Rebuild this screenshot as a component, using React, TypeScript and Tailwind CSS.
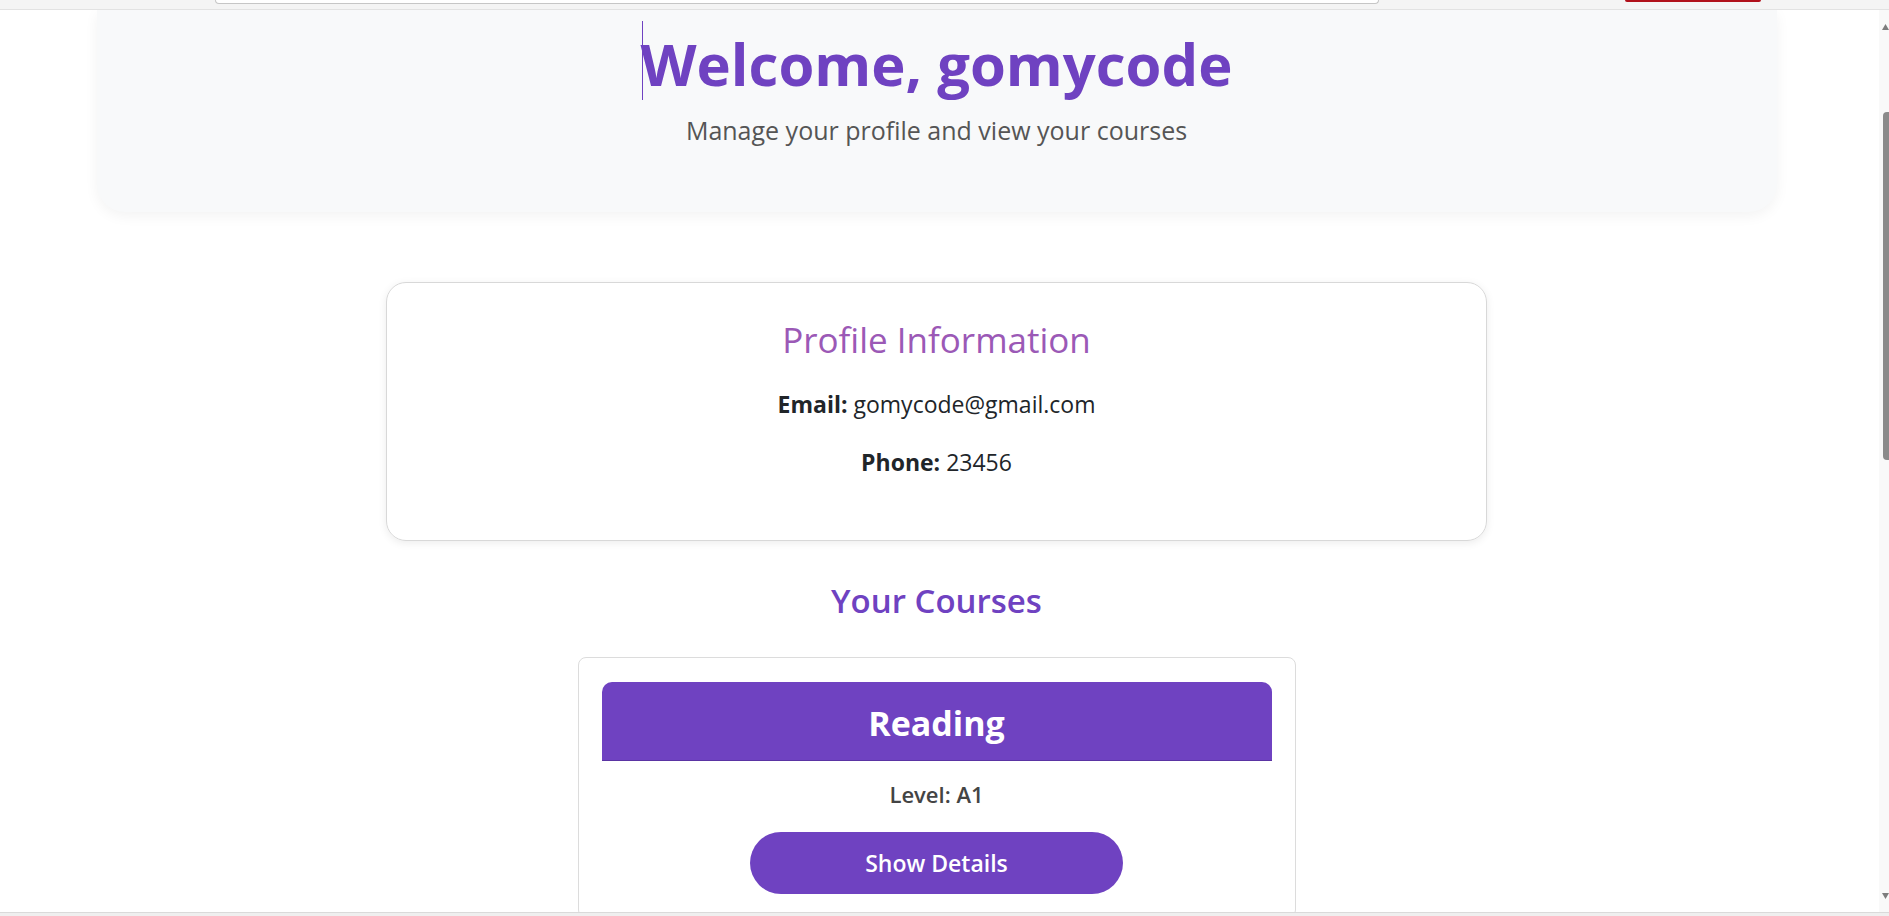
import React from 'react';

const TopBar = () => (
  <div className="h-[10px] shrink-0 bg-[#f4f4f4] border-b border-[#e2e2e2] flex items-start">
    <div className="w-[215px] shrink-0" />
    <div className="w-[1164px] h-[4px] shrink-0 bg-white border-x border-b border-[#c6c6c6] rounded-b-[8px]" />
    <div className="w-[246px] shrink-0" />
    <div className="w-[136px] h-[2px] shrink-0 bg-[#b0101a] rounded-b-[2px]" />
  </div>
);

const ScrollBar = () => (
  <div className="w-[16px] shrink-0 flex">
    <div className="w-[6px] bg-white" />
    <div className="flex-1 bg-[#f9f9f9] flex flex-col items-end pt-[14px] pb-[13px]">
      <svg width="7" height="6" viewBox="0 0 7 6">
        <polygon points="3.5,0 7,6 0,6" fill="#7d7d7d" />
      </svg>
      <div className="mt-[82px] w-[6px] h-[348px] rounded-l-[4px] bg-[#8b8b8b]" />
      <div className="flex-1" />
      <svg width="7" height="6" viewBox="0 0 7 6">
        <polygon points="0,0 7,0 3.5,6" fill="#7d7d7d" />
      </svg>
    </div>
  </div>
);

const Header = () => (
  <header className="w-[1680px] h-[202px] mx-auto bg-[#f8f9fa] rounded-b-[28px] shadow-[0_4px_14px_rgba(0,0,0,0.05)] pt-[14px] text-center">
    <h1 className="relative inline-block text-[58px] leading-[79px] font-bold text-[#6f42c1]">
      <span className="absolute left-[1px] top-[-3px] h-[79px] border-l border-[#6f42c1]" />
      Welcome, gomycode
    </h1>
    <p className="mt-[10px] text-[25px] leading-[34px] text-[#555]">
      Manage your profile and view your courses
    </p>
  </header>
);

const ProfileCard = () => (
  <section className="w-[1101px] h-[259px] mx-auto mt-[70px] border border-[#d8d8d8] rounded-[20px] shadow-[0_2px_8px_rgba(0,0,0,0.08)] pt-[33px] text-center">
    <h2 className="text-[35px] leading-[48px] text-[#9b59b6]">Profile Information</h2>
    <p className="mt-[25px] text-[23px] leading-[31px] text-[#212529]">
      <strong className="font-bold">Email:</strong> gomycode@gmail.com
    </p>
    <p className="mt-[27px] text-[23px] leading-[31px] text-[#212529]">
      <strong className="font-bold">Phone:</strong> 23456
    </p>
  </section>
);

const CourseCard = ({ title, level }: { title: string; level: string }) => (
  <div className="w-[718px] mx-auto border border-[#dcdcdc] rounded-[8px] px-[23px] pt-[24px] pb-[23px] text-center">
    <div className="bg-[#6f42c1] rounded-t-[10px] border-b border-[#5a34a3] pt-[18px] pb-[14px] text-[34px] leading-[46px] font-bold text-white">
      {title}
    </div>
    <p className="mt-[18px] text-[22px] leading-[30px] font-semibold text-[#444]">Level: {level}</p>
    <button className="mt-[23px] mx-auto block w-[373px] h-[62px] rounded-full bg-[#6f42c1] text-white text-[23px] font-semibold">
      Show Details
    </button>
  </div>
);

export default function App() {
  return (
    <div className="h-[916px] w-full flex flex-col overflow-hidden bg-white font-['Open_Sans',sans-serif]">
      <TopBar />
      <div className="flex flex-1 min-h-0">
        <main className="flex-1 overflow-hidden">
          <Header />
          <ProfileCard />
          <h2 className="mt-[37px] text-center text-[33px] leading-[45px] font-semibold text-[#6f42c1]">
            Your Courses
          </h2>
          <div className="mt-[34px]">
            <CourseCard title="Reading" level="A1" />
          </div>
        </main>
        <ScrollBar />
      </div>
      <div className="h-[4px] shrink-0 bg-[#efefef] border-t border-[#dadada]" />
    </div>
  );
}
